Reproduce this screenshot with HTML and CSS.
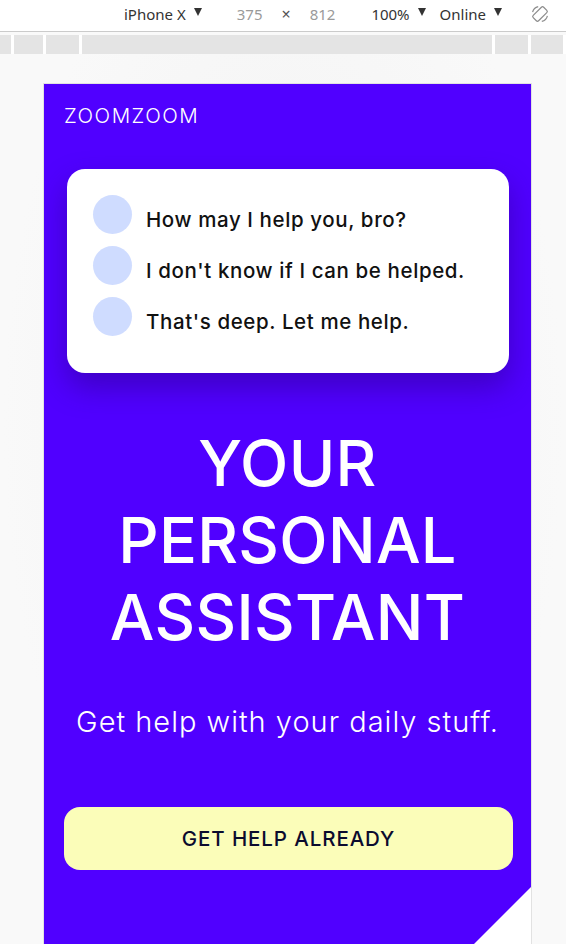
FILE: index.html
```html
<!DOCTYPE html>
<html lang="en">
<head>
<meta charset="utf-8">
<title>ZOOMZOOM</title>
<link rel="stylesheet" href="styles.css">
</head>
<body>
<div class="toolbar">
  <span class="device">iPhone X</span><span class="caret"></span>
  <span class="dim w">375</span><span class="times">&#215;</span><span class="dim">812</span>
  <span class="zoom">100%</span><span class="caret"></span>
  <span class="net">Online</span><span class="caret"></span>
  <svg class="rotate" width="20" height="20" viewBox="0 0 20 20" fill="none" stroke="#8c8c8c" stroke-width="1.2">
    <rect x="6.2" y="2.6" width="7.6" height="14.8" rx="1.6" transform="rotate(45 10 10)"/>
    <path d="M2.6 8.2 A7.6 7.6 0 0 1 8.2 2.6"/>
    <path d="M17.4 11.8 A7.6 7.6 0 0 1 11.8 17.4"/>
  </svg>
</div>
<div class="rulers">
  <div class="seg s1"></div><div class="seg s2"></div><div class="seg s3"></div>
  <div class="seg grow"></div><div class="seg s3"></div><div class="seg s4"></div>
</div>
<div class="stage">
  <div class="phone">
    <header class="logo">ZOOMZOOM</header>
    <section class="card">
      <div class="msg"><span class="avatar"></span><span class="line">How may I help you, bro?</span></div>
      <div class="msg"><span class="avatar"></span><span class="line">I don't know if I can be helped.</span></div>
      <div class="msg"><span class="avatar"></span><span class="line">That's deep. Let me help.</span></div>
    </section>
    <h1 class="title">YOUR<br>PERSONAL<br>ASSISTANT</h1>
    <p class="sub">Get help with your daily stuff.</p>
    <button class="cta">GET HELP ALREADY</button>
    <div class="corner"></div>
  </div>
</div>
</body>
</html>
```
FILE: styles.css
```css
html, body { margin: 0; padding: 0; }
body {
  background: #f9f9f9;
  font-family: Inter, "DejaVu Sans", sans-serif;
  height: 944px;
  overflow: hidden;
}
.toolbar {
  box-sizing: border-box;
  height: 32px;
  padding-bottom: 4px;
  background: #ffffff;
  border-bottom: 1px solid #cbcbcb;
  display: flex;
  align-items: center;
  padding-left: 124px;
  font-family: "Noto Sans", "Open Sans", sans-serif;
  font-size: 15px;
  color: #333;
  white-space: nowrap;
}
.caret {
  width: 0;
  height: 0;
  border-left: 4.5px solid transparent;
  border-right: 4.5px solid transparent;
  border-top: 8px solid #333;
  margin-left: 8px;
  margin-top: -3px;
}
.dim { color: #9a9a9a; }
.w { margin-left: 35px; }
.times { margin: 0 19px; color: #555; font-size: 16px; }
.zoom { margin-left: 36px; }
.net { margin-left: 14px; }
.rotate { margin-left: 28px; margin-top: 0; }
.rulers {
  margin-top: 3px;
  height: 19px;
  display: flex;
  gap: 3px;
  padding-right: 3px;
  background: #ffffff;
}
.seg { background: #e4e4e4; }
.s1 { width: 11px; }
.s2 { width: 29px; }
.s3 { width: 33px; }
.s4 { width: 32px; }
.grow { flex: 1; }
.stage {
  padding: 29px 0 0 43px;
  background: radial-gradient(ellipse at 50% 40%, #f2f2f2 0%, #f9f9f9 70%);
}
.phone {
  position: relative;
  width: 487px;
  height: 900px;
  background: #5000ff;
  border: 1px solid #e2e2e2;
  overflow: hidden;
  color: #fff;
}
.logo {
  padding: 21px 0 0 20px;
  font-size: 20.5px;
  font-weight: 300;
  letter-spacing: 1.5px;
  line-height: 22px;
}
.card {
  margin: 42px 22px 0 23px;
  background: #fff;
  border-radius: 18px;
  padding: 26px 26px 37px;
  box-shadow: 0 14px 30px rgba(40, 0, 120, 0.45);
  display: flex;
  flex-direction: column;
  gap: 12px;
  color: #111;
}
.msg {
  display: flex;
  align-items: center;
  gap: 14px;
  height: 39px;
}
.line {
  font-size: 20.5px;
  font-weight: 500;
  letter-spacing: 0.6px;
  padding-top: 10px;
}
.avatar {
  width: 39px;
  height: 39px;
  border-radius: 50%;
  background: #cfdcff;
  flex: none;
}
.title {
  margin: 52px 0 0;
  text-align: center;
  font-size: 63px;
  font-weight: 500;
  line-height: 77px;
  letter-spacing: 0.3px;
}
.sub {
  margin: 48px 0 0;
  text-align: center;
  font-size: 29px;
  font-weight: 300;
  letter-spacing: 1px;
}
.cta {
  display: block;
  margin: 68px 18px 0 20px;
  width: calc(100% - 38px);
  height: 63px;
  border: 0;
  border-radius: 16px;
  background: #fbfdb9;
  color: #0b0b2e;
  font-family: Inter, "DejaVu Sans", sans-serif;
  font-size: 20.5px;
  font-weight: 500;
  letter-spacing: 0.9px;
}
.corner {
  position: absolute;
  right: 0;
  top: 803px;
  width: 100px;
  height: 100px;
  background: #fff;
  clip-path: polygon(100% 0, 100% 100%, 0 100%);
}
```
